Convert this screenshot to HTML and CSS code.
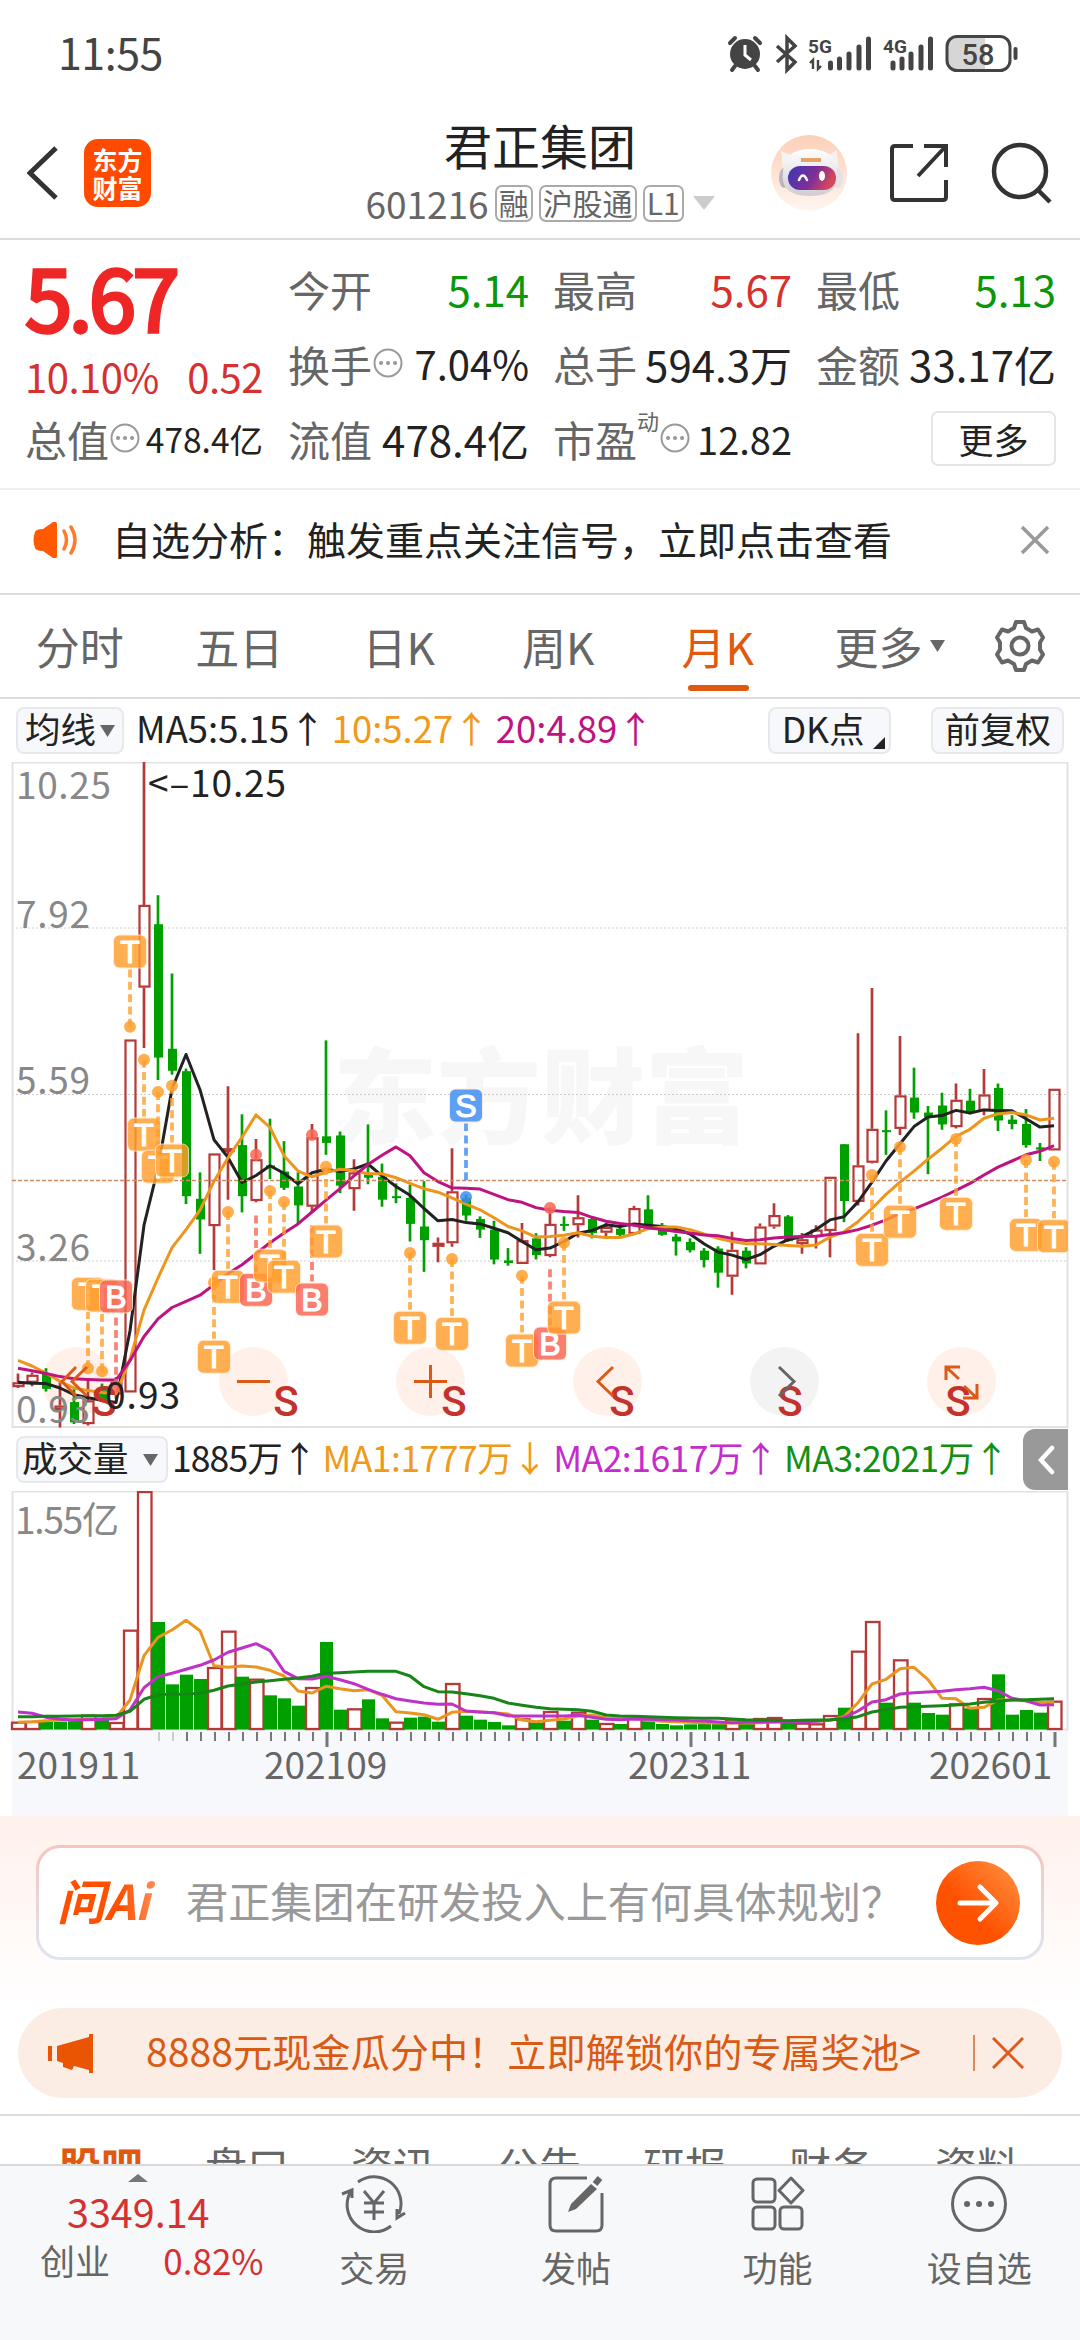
FILE: index.html
```html
<!DOCTYPE html>
<html lang="zh-CN">
  <head>
    <meta charset="UTF-8" />
    <meta name="viewport" content="width=device-width, initial-scale=1.0" />
    <title>君正集团 601216</title>
    <link rel="stylesheet" href="styles.css">
  </head>
  <body>
    <div class="status-bar">
      <span class="time">11:55</span>
      <svg class="status-icons" width="292" height="40" viewBox="726 34 292 40">
        <g fill="none" stroke="#444" stroke-width="4" stroke-linecap="round">
          <path d="M730 43l5-5M760 43l-5-5M735 66l-3 4M755 66l3 4" />
        </g>
        <circle cx="745" cy="54" r="15" fill="#444" />
        <path d="M745 45v10l6 5" fill="none" stroke="#fff" stroke-width="3" />
        <path d="M777 46l18 16-8 8V38l8 8-18 16" fill="none" stroke="#444" stroke-width="3.5" />
        <text x="808" y="53" class="net">5G</text>
        <path d="M813 69v-9l-3 3M818 60v9l3-3" fill="none" stroke="#444" stroke-width="2.4" />
        <text x="883" y="53" class="net">4G</text>
        <path d="M830.5 63v5M839.5 59v9M849 54v14M859 47v21M868.5 39v29M893 63v5M902 59v9M911 54v14M921 47v21M930.5 39v29"
          stroke="#444" stroke-width="5" stroke-linecap="round" />
        <path d="M956 37h29v33h-29q-9 0-9-9v-15q0-9 9-9z" fill="#d6d6d6" />
        <rect x="947" y="36.500" width="63" height="34" rx="10" fill="none" stroke="#444" stroke-width="3" />
        <path d="M1015.500 49v9" stroke="#444" stroke-width="4" stroke-linecap="round" />
        <text x="978" y="65" class="batt">58</text>
      </svg>
    </div>

    <header>
      <div class="head-left">
        <svg width="32" height="54" viewBox="0 0 32 54"><path d="M29 2L3 27l26 25" fill="none" stroke="#333" stroke-width="5" /></svg>
        <div class="logo"><span>东方</span><span>财富</span></div>
      </div>
      <div class="head-title">
        <h1>君正集团</h1>
        <div class="code">
          <span>601216</span><i>融</i><i>沪股通</i><i>L1</i>
          <svg width="22" height="14" viewBox="0 0 22 14"><path d="M0 0h22L11 14z" fill="#ccc" /></svg>
        </div>
      </div>
      <div class="head-right">
        <svg class="robot" width="76" height="76" viewBox="0 0 76 76">
          <defs>
            <linearGradient id="halo" x1="0" y1="0" x2="0" y2="1"><stop offset="0" stop-color="#fcd0b8" /><stop offset="1" stop-color="#fff6f0" /></linearGradient>
            <linearGradient id="visor" x1="0" y1="0" x2="1" y2="0.300"><stop offset="0" stop-color="#3c38b4" /><stop offset="0.600" stop-color="#7d2f98" /><stop offset="1" stop-color="#d5475c" /></linearGradient>
            <linearGradient id="shell" x1="0" y1="0" x2="0" y2="1"><stop offset="0" stop-color="#fff" /><stop offset="1" stop-color="#cfccd4" /></linearGradient>
          </defs>
          <circle cx="38" cy="38" r="38" fill="url(#halo)" />
          <path d="M12 32l-2-16 12 5zM58 20l8-5 1 18z" fill="#f5f2f2" />
          <ellipse cx="13" cy="43" rx="5" ry="10" fill="#b9b6c0" />
          <ellipse cx="67" cy="43" rx="5" ry="10" fill="#e5e1e4" />
          <path d="M12 36q2-22 27-22t27 22q4 25-27 25T12 36z" fill="url(#shell)" />
          <path d="M30 25h20" stroke="#e9a265" stroke-width="4" />
          <rect x="17" y="31" width="48" height="24" rx="12" fill="url(#visor)" />
          <path d="M28 45q4-9 8 0" fill="none" stroke="#fff" stroke-width="2.500" stroke-linecap="round" />
          <ellipse cx="51" cy="41" rx="3" ry="5" fill="#fff" />
        </svg>
        <svg width="60" height="60" viewBox="0 0 60 60" fill="none" stroke="#333" stroke-width="4">
          <path d="M24 3H6q-3 0-3 3v48q0 3 3 3h48q3 0 3-3V37M35 3h22v21M57 3L29 33" />
        </svg>
        <svg width="62" height="62" viewBox="0 0 62 62" fill="none" stroke="#333" stroke-width="4.500">
          <circle cx="29" cy="29" r="26" /><path d="M47 48l12 12" />
        </svg>
      </div>
    </header>

    <section class="quote">
      <div class="quote-main">
        <div class="price">5.67</div>
        <div class="change"><span>10.10%</span><span>0.52</span></div>
        <div class="cell"><label>总值</label><svg class="tip"><use href="#tip" /></svg><b class="small">478.4亿</b></div>
      </div>
      <div class="quote-grid">
        <div class="cell"><label>今开</label><b class="down">5.14</b></div>
        <div class="cell"><label>最高</label><b class="up">5.67</b></div>
        <div class="cell"><label>最低</label><b class="down">5.13</b></div>
        <div class="cell"><label>换手</label><svg class="tip"><use href="#tip" /></svg><b class="rate">7.04%</b></div>
        <div class="cell"><label>总手</label><b>594.3万</b></div>
        <div class="cell"><label>金额</label><b>33.17亿</b></div>
        <div class="cell"><label>流值</label><b>478.4亿</b></div>
        <div class="cell"><label>市盈</label><sup>动</sup><svg class="tip"><use href="#tip" /></svg><b class="mid">12.82</b></div>
        <div class="cell"><button class="more-btn">更多</button></div>
      </div>
      <svg width="0" height="0" class="defs">
        <symbol id="tip" viewBox="0 0 30 30">
          <circle cx="15" cy="15" r="13.500" fill="none" stroke="#999" stroke-width="2" />
          <path d="M8 15h.1M15 15h.1M22 15h.1" stroke="#999" stroke-width="4" stroke-linecap="round" />
        </symbol>
      </svg>
    </section>

    <section class="notice">
      <svg width="46" height="36" viewBox="0 0 46 36">
        <path d="M2 10q1-3 8-3L20 0q4-2 4 3v30q0 5-4 3L10 29q-7 0-8-3-3-8 0-16z" fill="#ff5a00" />
        <path d="M31 9q5 9 0 18M38 5q8 13 0 26" fill="none" stroke="#ff7a2a" stroke-width="3.500" stroke-linecap="round" />
      </svg>
      <span>自选分析：触发重点关注信号，立即点击查看</span>
      <svg class="close" width="30" height="30" viewBox="0 0 30 30"><path d="M2 2l26 26M28 2L2 28" stroke="#999" stroke-width="3.500" /></svg>
    </section>

    <nav class="period-tabs">
      <a>分时</a><a>五日</a><a>日K</a><a>周K</a><a class="active">月K</a>
      <a class="more">更多<svg width="15" height="12" viewBox="0 0 15 12"><path d="M0 0h15L7.500 12z" fill="#666" /></svg></a>
      <svg class="gear" width="52" height="52" viewBox="0 0 52 52" fill="none" stroke="#666" stroke-width="4" stroke-linejoin="round">
        <path d="M22 2h8l2 6 6 3.500 6-2 5 8-3 5v7l3 5-5 8-6-2-6 3.500-2 6h-8l-2-6-6-3.500-6 2-5-8 3-5v-7l-3-5 5-8 6 2L20 8z" />
        <circle cx="26" cy="26" r="8.500" />
      </svg>
    </nav>

    <div class="ind-row">
      <div class="pill"><span>均线</span><svg width="15" height="12" viewBox="0 0 15 12"><path d="M0 0h15L7.500 12z" fill="#666" /></svg></div>
      <div class="ma-values">
        <span class="ma5">MA5:5.15↑</span><span class="ma10">10:5.27↑</span><span class="ma20">20:4.89↑</span>
      </div>
      <div class="pill dk"><span>DK点</span><svg width="12" height="12" viewBox="0 0 12 12"><path d="M12 0v12H0z" fill="#222" /></svg></div>
      <div class="pill adj"><span>前复权</span></div>
    </div>

    <svg id="kline" width="1080" height="666"></svg>

    <div class="ind-row vol-row">
      <div class="pill vol"><span>成交量</span><svg width="15" height="12" viewBox="0 0 15 12"><path d="M0 0h15L7.500 12z" fill="#666" /></svg></div>
      <div class="vol-values">
        <span class="now">1885万↑</span><span class="v1">MA1:1777万↓</span><span class="v2">MA2:1617万↑</span><span class="v3">MA3:2021万↑</span>
      </div>
      <div class="drawer"><svg width="18" height="30" viewBox="0 0 18 30"><path d="M15 3L4 15l11 12" fill="none" stroke="#fff" stroke-width="4.500" stroke-linecap="round" /></svg></div>
    </div>

    <svg id="volume" width="1080" height="325"></svg>

    <section class="ask">
      <div class="ask-box">
        <span class="ask-logo">问Ai</span>
        <span class="ask-text">君正集团在研发投入上有何具体规划？</span>
        <div class="go"><svg width="44" height="40" viewBox="0 0 44 40"><path d="M4 20h35M24 4l16 16-16 16" fill="none" stroke="#fff" stroke-width="5" stroke-linecap="round" stroke-linejoin="round" /></svg></div>
      </div>
    </section>

    <section class="promo">
      <svg width="46" height="40" viewBox="0 0 46 40"><path d="M2 13v15" stroke="#ea5504" stroke-width="4" /><path d="M9 13L41 4V1h4v39h-4v-3l-15-4-2 4-9-3v-4l-6-2z" fill="#ea5504" /></svg>
      <span>8888元现金瓜分中！立即解锁你的专属奖池&gt;</span>
      <i></i>
      <svg width="32" height="32" viewBox="0 0 32 32"><path d="M1 1l30 30M31 1L1 31" stroke="#e0591a" stroke-width="3" /></svg>
    </section>

    <nav class="sub-tabs">
      <a class="active">股吧</a><a>盘口</a><a>资讯</a><a>公告</a><a>研报</a><a>财务</a><a>资料</a>
    </nav>

    <footer>
      <div class="index">
        <svg class="tri" width="20" height="8" viewBox="0 0 20 8"><path d="M0 8h20L10 0z" fill="#777" /></svg>
        <div class="index-val">3349.14</div>
        <div class="index-row"><span>创业</span><b>0.82%</b></div>
      </div>
      <div class="tool">
        <svg width="66" height="58" viewBox="0 0 66 58" fill="none" stroke="#666" stroke-width="3">
          <path d="M17 7A27 27 0 0 1 58 39M50 51A27 27 0 0 1 10 16M1 19l10-4v8M64 38l-8 5v-9M23 16l10 12 10-12M33 28v17M23 28h20M23 37h20" />
        </svg>
        <span>交易</span>
      </div>
      <div class="tool">
        <svg width="56" height="58" viewBox="0 0 56 58" fill="none" stroke="#666" stroke-width="3">
          <path d="M39 3H8Q2 3 2 9v41q0 6 6 6h40q6 0 6-6V18" />
          <path d="M20 37l3-8L43 9l6 5-21 20z" fill="#666" stroke="none" /><path d="M47 9l5-6" stroke-width="6" />
        </svg>
        <span>发帖</span>
      </div>
      <div class="tool">
        <svg width="54" height="58" viewBox="0 0 54 58" fill="none" stroke="#666" stroke-width="3">
          <rect x="2" y="4" width="22" height="23" rx="4" /><rect x="2" y="32" width="22" height="22" rx="4" /><rect x="29" y="32" width="22" height="22" rx="4" />
          <path d="M40 3l12 12.500L40 28 28 15.500z" stroke-linejoin="round" />
        </svg>
        <span>功能</span>
      </div>
      <div class="tool">
        <svg width="58" height="58" viewBox="0 0 58 58" fill="none" stroke="#666" stroke-width="3">
          <circle cx="29" cy="29" r="26.500" /><path d="M17 29h.1M29 29h.1M41 29h.1" stroke-width="6" stroke-linecap="round" />
        </svg>
        <span>设自选</span>
      </div>
    </footer>

    <script src="chart.js"></script>
  </body>
</html>
```
FILE: styles.css
```css
:root {
  --text: #222;
  --label: #666;
  --line: #dcdcdc;
  --up: #d6302f;
  --down: #0a970a;
  --orange: #e0590f;
}

* {
  box-sizing: border-box;
}

body {
  margin: 0;
  width: 1080px;
  height: 2340px;
  overflow: hidden;
  background: #fff;
  color: var(--text);
  font-family: "Noto Sans CJK SC", "Noto Sans", sans-serif;
  display: flex;
  flex-direction: column;
}

body > * {
  flex-shrink: 0;
}

svg {
  display: block;
  flex-shrink: 0;
}

i,
b {
  font-style: normal;
  font-weight: normal;
}

.status-bar {
  height: 108px;
  padding: 0 62px 0 58px;
  display: flex;
  align-items: center;
  justify-content: space-between;
}

.time {
  padding-bottom: 6px;
  font-size: 43px;
  letter-spacing: -0.500px;
  color: #444;
}

.net {
  font: bold 19px "Roboto", sans-serif;
  fill: #444;
}

.batt {
  font: 500 29px "Roboto", sans-serif;
  fill: #444;
  text-anchor: middle;
}

header {
  height: 132px;
  padding: 0 27px 0 27px;
  border-bottom: 2px solid var(--line);
  display: grid;
  grid-template-columns: 1fr auto 1fr;
  align-items: center;
}

.head-left {
  display: flex;
  align-items: center;
  gap: 25px;
}

.logo {
  width: 67px;
  height: 68px;
  border-radius: 14px;
  background: #ff4a00;
  color: #fff;
  font-size: 25px;
  font-weight: bold;
  line-height: 28px;
  display: flex;
  flex-direction: column;
  align-items: center;
  justify-content: center;
}

.head-title {
  display: flex;
  flex-direction: column;
  align-items: center;
}

h1 {
  margin: -4px 0 0;
  font-size: 48px;
  font-weight: normal;
  line-height: 64px;
}

.code {
  display: flex;
  align-items: center;
  gap: 6px;
  font-size: 37px;
  line-height: 54px;
  color: var(--label);
}

.code i {
  height: 37px;
  padding: 0 2px;
  border: 2px solid #aaa;
  border-radius: 7px;
  font-size: 30px;
  line-height: 31px;
}

.code svg {
  margin-left: 3px;
}

.head-right {
  display: flex;
  align-items: center;
  justify-content: flex-end;
  gap: 42px;
}

.quote {
  height: 250px;
  padding: 11px 24px 0 25px;
  border-bottom: 2px solid #eee;
  display: flex;
  gap: 25px;
}

.quote-main {
  width: 238px;
}

.price {
  height: 95px;
  font-size: 85px;
  line-height: 87px;
  letter-spacing: -3.500px;
  color: #ee2626;
  -webkit-text-stroke: 3.500px #ee2626;
}

.change {
  height: 55px;
  display: flex;
  justify-content: space-between;
  font-size: 40px;
  line-height: 60px;
  letter-spacing: -0.500px;
  color: var(--up);
}

.quote-grid {
  flex: 1;
  display: grid;
  grid-template-columns: 241px 239px 1fr;
  grid-template-rows: 75px 75px 75px;
  column-gap: 24px;
}

.cell {
  height: 75px;
  display: flex;
  align-items: center;
  font-size: 42px;
  line-height: 75px;
}

.cell label {
  color: var(--label);
  font-size: 42px;
}

.cell b {
  margin-left: auto;
}

.cell .small {
  font-size: 33.500px;
}

.cell .rate {
  font-size: 40px;
}

.cell .mid {
  font-size: 38px;
}

.cell sup {
  font-size: 22px;
  line-height: 30px;
  color: var(--label);
  align-self: flex-start;
  margin-top: 4px;
}

.tip {
  width: 30px;
  height: 30px;
  margin: -1px 0 0 1px;
}

.defs {
  position: absolute;
}

.up {
  color: var(--up);
}

.down {
  color: var(--down);
}

.more-btn {
  margin: 0 0 0 auto;
  width: 125px;
  height: 55px;
  padding: 0;
  border: 2px solid #e3e5e8;
  border-radius: 7px;
  background: #fff;
  color: var(--text);
  font: 35px/45px "Noto Sans CJK SC", sans-serif;
}

.notice {
  height: 105px;
  padding: 0 30px 3px 33px;
  border-bottom: 2px solid var(--line);
  display: flex;
  align-items: center;
  font-size: 39px;
}

.notice span {
  margin-left: 33px;
  padding-bottom: 4px;
}

.close {
  margin-left: auto;
}

.period-tabs {
  height: 104px;
  border-bottom: 2px solid var(--line);
  display: flex;
  align-items: center;
}

.period-tabs a {
  position: relative;
  width: 159.500px;
  text-align: center;
  font-size: 44px;
  line-height: 98px;
  color: var(--label);
}

.period-tabs .active {
  color: var(--orange);
}

.period-tabs .active::after {
  content: "";
  position: absolute;
  left: 50%;
  bottom: 4px;
  width: 61px;
  height: 6px;
  margin-left: -30px;
  border-radius: 3px;
  background: var(--orange);
}

.period-tabs .more {
  width: 184px;
  display: flex;
  align-items: center;
  justify-content: center;
  gap: 7px;
}

.gear {
  margin-left: 12px;
}

.ind-row {
  height: 63px;
  padding: 0 16px;
  display: flex;
  align-items: center;
}

.pill {
  height: 47px;
  padding: 0 7px;
  border: 2px solid #e6e8ec;
  border-radius: 8px;
  background: #f7f8fb;
  display: flex;
  align-items: center;
  gap: 4px;
  font-size: 35.500px;
  line-height: 40px;
}

.pill span {
  margin-top: -5px;
}

.ma-values {
  margin: -6px 0 0 12px;
  display: flex;
  gap: 6px;
  font-size: 36.500px;
}

.ma10 {
  color: #f09a1a;
}

.ma20 {
  color: #bd1482;
}

.pill.dk {
  margin-left: auto;
  padding: 0 4px 0 12px;
  gap: 9px;
}

.dk svg {
  align-self: flex-end;
  margin-bottom: 3px;
}

.pill.adj {
  margin-left: 40px;
  padding: 0 11px;
}

.vol-row {
  padding-right: 12px;
}

.pill.vol {
  width: 152px;
  padding: 0 8px 0 4px;
  justify-content: space-between;
}

.vol-values {
  margin: -6px 0 0 4px;
  display: flex;
  gap: 6px;
  font-size: 35.500px;
  letter-spacing: -0.500px;
}

.now {
  letter-spacing: -0.900px;
}

.v1 {
  color: #f09a1a;
}

.v2 {
  color: #c52ccb;
}

.v3 {
  color: #129012;
}

.drawer {
  margin-left: auto;
  width: 45px;
  height: 61px;
  border-radius: 12px 0 0 12px;
  background: #999;
  display: flex;
  align-items: center;
  justify-content: center;
}

.axis-text {
  font-size: 37px;
}

.badge {
  font: 32px "Liberation Sans", sans-serif;
  fill: #fff;
  stroke: #fff;
  stroke-width: 1.200px;
  text-anchor: middle;
}

.split {
  font: 500 42px "Roboto", sans-serif;
  fill: #c4322f;
  text-anchor: middle;
}

.watermark {
  font-size: 104px;
  font-weight: 900;
  fill: #f7f7f7;
}

.ask {
  height: 191px;
  padding: 29px 36px 0;
  background: linear-gradient(#fff1ec, #fff);
}

.ask-box {
  height: 115px;
  padding: 0 21px;
  border: 3px solid transparent;
  border-radius: 24px;
  background: linear-gradient(#fff, #fff) padding-box, linear-gradient(#f5c6bd, #dde5f3) border-box;
  display: flex;
  align-items: center;
}

.ask-logo {
  width: 106px;
  margin: -8px 0 0 -3px;
  font-size: 48px;
  font-weight: bold;
  font-style: italic;
  letter-spacing: -0.500px;
  color: transparent;
  background: linear-gradient(90deg, #ff5000 60%, #ff9a66);
  -webkit-background-clip: text;
  background-clip: text;
}

.ask-text {
  margin: -6px 0 0 23px;
  font-size: 42.200px;
  color: #999;
  white-space: nowrap;
}

.go {
  margin-left: auto;
  width: 84px;
  height: 84px;
  flex-shrink: 0;
  border-radius: 50%;
  background: linear-gradient(45deg, #ff5200 40%, #ff9545);
  display: flex;
  align-items: center;
  justify-content: center;
}

.promo {
  height: 90px;
  margin: 1px 18px 0;
  padding: 0 38px 0 30px;
  border-radius: 45px;
  background: #fcede4;
  display: flex;
  align-items: center;
  font-size: 39.200px;
  color: #d85a14;
}

.promo span {
  margin: -7px 0 0 52px;
}

.promo i {
  margin: 0 17px 0 auto;
  width: 2px;
  height: 36px;
  background: #d98a5c;
}

.sub-tabs {
  margin-top: 16px;
  height: 50px;
  padding: 0 28px;
  border-top: 2px solid var(--line);
  overflow: hidden;
  display: flex;
}

.sub-tabs a {
  width: 146px;
  text-align: center;
  font-size: 42px;
  line-height: 98px;
  color: var(--label);
}

.sub-tabs .active {
  color: var(--orange);
  font-weight: bold;
}

footer {
  flex: 1;
  border-top: 2px solid #d8d8d8;
  background: #f7f8fa;
  color: var(--label);
  display: flex;
}

.index {
  width: 274px;
  padding: 8px 10px 0 40px;
}

.tri {
  margin-left: 88px;
}

.index-val {
  margin: 5px 0 0 27px;
  font-size: 39.500px;
  line-height: 48px;
  color: var(--up);
}

.index-row {
  display: flex;
  justify-content: space-between;
  align-items: center;
  font-size: 35px;
  line-height: 50px;
}

.index-row b {
  color: var(--up);
}

.tool {
  width: 202px;
  padding-top: 9px;
  display: flex;
  flex-direction: column;
  align-items: center;
  gap: 10px;
  font-size: 35px;
  line-height: 48px;
}
```
FILE: chart.js
```js
const RED = "#b53a37";
const GREEN = "#00a000";
const X0 = 18;
const STEP = 14;

// direction, high, body top, body bottom, low
const candles = [
  ["r", 1417, 1437, 1448, 1450], ["r", 1415, 1420, 1438, 1446], ["g", 1405, 1418, 1452, 1458], ["r", 1437, 1490, 1500, 1540],
  ["g", 1450, 1482, 1528, 1532], ["r", 1430, 1478, 1532, 1535], ["g", 1440, 1455, 1475, 1480], ["r", 1425, 1436, 1465, 1475],
  ["r", 658, 658, 1460, 1460], ["r", 27, 352, 540, 677], ["g", 330, 396, 699, 750], ["g", 508, 679, 729, 738],
  ["g", 724, 730, 1014, 1032], ["g", 960, 1020, 1067, 1145], ["r", 917, 917, 1082, 1182], ["r", 764, 905, 913, 1022],
  ["g", 828, 898, 1014, 1051], ["r", 884, 930, 1025, 1028], ["g", 838, 944, 948, 975], ["g", 889, 958, 995, 1000],
  ["g", 960, 992, 1035, 1078], ["r", 850, 880, 1038, 1050], ["g", 660, 878, 893, 920], ["g", 867, 876, 990, 1007],
  ["r", 930, 960, 998, 1047], ["g", 851, 965, 972, 987], ["g", 940, 970, 1022, 1038], ["g", 985, 1014, 1018, 1030],
  ["g", 988, 1018, 1077, 1117], ["g", 980, 1083, 1114, 1186], ["r", 1108, 1120, 1129, 1164], ["r", 905, 1003, 1121, 1129],
  ["g", 1010, 1018, 1058, 1070], ["g", 1060, 1066, 1090, 1109], ["g", 1070, 1090, 1158, 1169], ["g", 1132, 1160, 1166, 1172],
  ["r", 1075, 1114, 1168, 1168], ["g", 1098, 1110, 1148, 1158], ["r", 1040, 1077, 1150, 1153], ["g", 1060, 1077, 1081, 1093],
  ["r", 1012, 1062, 1080, 1108], ["g", 1062, 1066, 1098, 1110], ["r", 1075, 1084, 1097, 1110], ["g", 1080, 1088, 1102, 1108],
  ["r", 1036, 1041, 1100, 1100], ["g", 1012, 1044, 1080, 1082], ["g", 1075, 1090, 1102, 1104], ["g", 1100, 1106, 1117, 1149],
  ["g", 1110, 1118, 1137, 1142], ["g", 1132, 1138, 1159, 1176], ["g", 1128, 1133, 1188, 1222], ["r", 1095, 1136, 1197, 1238],
  ["g", 1130, 1138, 1167, 1178], ["r", 1076, 1083, 1169, 1169], ["r", 1030, 1057, 1083, 1088], ["g", 1057, 1060, 1116, 1118],
  ["r", 1098, 1112, 1123, 1145], ["r", 1080, 1090, 1107, 1133], ["r", 970, 970, 1093, 1153], ["g", 896, 896, 1025, 1073],
  ["r", 644, 944, 1027, 1035], ["r", 541, 861, 938, 940], ["g", 819, 864, 867, 920], ["r", 650, 785, 861, 875],
  ["g", 722, 790, 824, 838], ["g", 809, 824, 835, 964], ["g", 779, 808, 851, 863], ["r", 758, 795, 857, 860],
  ["g", 770, 797, 823, 828], ["r", 725, 783, 820, 830], ["g", 758, 768, 842, 866], ["g", 830, 840, 850, 862],
  ["g", 816, 850, 898, 904], ["g", 893, 903, 908, 934], ["r", 770, 770, 910, 910],
];

const ma5 = [1437, 1439, 1440, 1450, 1465, 1472, 1478, 1483, 1320, 1080, 950, 770, 692, 772, 886, 926, 983, 967, 945, 962, 986, 961, 953, 958, 952, 941, 968, 992, 1012, 1042, 1070, 1067, 1074, 1077, 1087, 1097, 1117, 1136, 1132, 1117, 1098, 1092, 1079, 1083, 1077, 1080, 1083, 1088, 1100, 1122, 1141, 1148, 1158, 1147, 1128, 1113, 1106, 1090, 1068, 1061, 1027, 982, 934, 895, 856, 834, 831, 819, 825, 818, 819, 820, 838, 857, 854];
const ma10 = [1387, 1400, 1416, 1435, 1450, 1456, 1460, 1463, 1385, 1273, 1200, 1131, 1090, 1046, 980, 927, 880, 829, 858, 922, 957, 970, 960, 953, 956, 963, 963, 972, 985, 997, 1005, 1018, 1032, 1045, 1063, 1083, 1093, 1107, 1106, 1103, 1097, 1105, 1108, 1108, 1100, 1088, 1084, 1084, 1090, 1100, 1110, 1117, 1122, 1122, 1124, 1126, 1128, 1125, 1107, 1095, 1072, 1042, 1010, 982, 957, 930, 905, 878, 862, 837, 827, 824, 829, 841, 837];
const ma20 = [1405, 1411, 1417, 1424, 1429, 1431, 1432, 1432, 1388, 1333, 1293, 1267, 1253, 1239, 1215, 1190, 1170, 1145, 1120, 1098, 1077, 1050, 1023, 997, 968, 942, 921, 902, 922, 961, 981, 995, 996, 998, 1010, 1022, 1028, 1040, 1046, 1049, 1051, 1062, 1071, 1076, 1080, 1086, 1090, 1094, 1098, 1102, 1104, 1110, 1115, 1113, 1109, 1107, 1106, 1105, 1101, 1097, 1090, 1080, 1068, 1053, 1043, 1030, 1016, 1001, 985, 966, 948, 934, 920, 912, 899];

// candle index, badge letter, badge y, dot y, optional dash start
const marks = [
  [5, "T", 1236, 1405], [6, "T", 1240, 1412], [7, "B", 1242, 1448], [8, "T", 458, 629], [9, "T", 874, 704],
  [10, "T", 947, 777], [11, "T", 933, 763], [14, "T", 1379, 1210], [15, "T", 1220, 1050], [17, "B", 1227, 920, 1058],
  [18, "T", 1172, 1002], [19, "T", 1197, 1027], [21, "B", 1249, 875, 1080], [22, "T", 1117, 947], [28, "T", 1313, 1143],
  [31, "T", 1327, 1157], [32, "S", 808, 1016, 978], [36, "T", 1365, 1195], [38, "B", 1349, 1041, 1180], [39, "T", 1290, 1120],
  [61, "T", 1136, 966], [63, "T", 1072, 902], [67, "T", 1054, 884], [72, "T", 1102, 932], [74, "T", 1105, 936],
];
const markColor = { T: "#ff9f2e", B: "#fa6655", S: "#3d8df5" };

const volTop = [905, 903, 903, 905, 900, 884, 900, 906, 629, 213, 606, 793, 764, 777, 741, 632, 770, 776, 826, 835, 857, 801, 666, 869, 865, 838, 895, 905, 893, 890, 905, 789, 887, 899, 906, 916, 895, 908, 873, 902, 875, 899, 909, 912, 887, 904, 912, 916, 913, 910, 911, 896, 908, 894, 891, 908, 908, 910, 885, 863, 692, 603, 848, 718, 848, 879, 884, 850, 865, 834, 763, 884, 870, 878, 842];
const volRed = [0, 1, 5, 7, 8, 9, 14, 15, 17, 21, 24, 27, 31, 36, 38, 40, 42, 44, 51, 53, 54, 56, 57, 58, 60, 61, 63, 67, 69, 74];
const vma1 = [907, 905, 902, 900, 899, 897, 896, 893, 840, 707, 652, 630, 601, 632, 737, 742, 738, 741, 751, 768, 813, 819, 799, 806, 812, 809, 826, 875, 879, 884, 898, 877, 874, 876, 878, 882, 900, 905, 901, 897, 888, 885, 893, 896, 895, 900, 904, 905, 907, 908, 909, 909, 909, 908, 905, 903, 903, 904, 901, 890, 848, 792, 778, 746, 742, 779, 835, 836, 865, 862, 840, 840, 842, 846, 847];
const vma2 = [876, 880, 892, 898, 900, 899, 898, 896, 870, 803, 770, 760, 748, 736, 720, 697, 684, 671, 692, 754, 776, 777, 769, 779, 791, 808, 823, 836, 843, 849, 853, 852, 873, 876, 878, 887, 888, 888, 888, 888, 886, 892, 898, 899, 897, 898, 899, 900, 902, 903, 906, 908, 907, 906, 906, 906, 905, 904, 900, 893, 873, 846, 839, 822, 818, 816, 814, 809, 806, 802, 812, 835, 842, 855, 854];
const vma3 = [890, 890, 889, 889, 888, 887, 887, 886, 874, 838, 824, 822, 823, 820, 811, 798, 792, 786, 782, 778, 774, 769, 760, 758, 756, 754, 754, 754, 768, 800, 815, 816, 821, 827, 835, 849, 856, 862, 866, 868, 869, 874, 885, 888, 889, 890, 892, 893, 894, 895, 895, 897, 899, 900, 901, 902, 901, 900, 899, 897, 890, 876, 869, 862, 860, 859, 857, 855, 852, 847, 843, 840, 839, 838, 836];

const px = (i) => X0 + i * STEP;
const priceY = (v) => v * 0.44 - 12;
const volY = (v) => v / 3 - 71;

function line(values, y, color, width) {
  const points = values.map((v, i) => `${px(i)},${y(v).toFixed(1)}`).join(" ");
  return `<polyline points="${points}" fill="none" stroke="${color}" stroke-width="${width}" stroke-linejoin="round"/>`;
}

function label(x, y, text, color, extra = "") {
  return `<text class="axis-text" x="${x}" y="${y}" fill="${color}" ${extra}>${text}</text>`;
}

function drawKline() {
  let s = '<defs><clipPath id="clip"><rect x="12" y="0" width="1056" height="666"/></clipPath></defs>';
  s += '<text class="watermark" x="333" y="374">东方财富</text>';
  [166, 332.5, 499].forEach((y) => {
    s += `<path d="M12 ${y}H1068" stroke="#ccc" stroke-width="1" stroke-dasharray="2 2"/>`;
  });
  s += '<rect x="12.500" y="0.500" width="1055" height="664.500" fill="none" stroke="#e2e2e2" stroke-width="2"/>';

  [76.5, 253.5, 430.5, 607.5, 784.5, 961.5].forEach((x, i) => {
    s += `<circle cx="${x}" cy="619.500" r="34.500" fill="${i === 4 ? "#f3f3f3" : "#fff1ea"}"/>`;
  });

  candles.forEach(([dir, high, top, bottom, low], i) => {
    const x = px(i);
    const [h, t, b, l] = [high, top, bottom, low].map(priceY);
    if (dir === "r") {
      s += `<path d="M${x} ${h}V${t}M${x} ${b}V${l}" stroke="${RED}" stroke-width="2.700"/>`;
      s += `<rect x="${x - 4.5}" y="${t + 1}" width="10" height="${Math.max(b - t - 2, 2)}" fill="none" stroke="${RED}" stroke-width="2.200"/>`;
    } else {
      s += `<path d="M${x} ${h}V${l}" stroke="${GREEN}" stroke-width="2.700"/>`;
      s += `<rect x="${x - 4}" y="${t}" width="9" height="${Math.max(b - t, 2)}" fill="${GREEN}"/>`;
    }
  });

  s += line(ma5, priceY, "#222", 3);
  s += line(ma10, priceY, "#ee951c", 3);
  s += line(ma20, priceY, "#bd1482", 3);
  s += '<path d="M12 418.500H1068" stroke="#d08a60" stroke-width="1.500" stroke-dasharray="4 2"/>';

  s += '<g clip-path="url(#clip)">';
  marks.forEach(([i, type, badge, dot, dash]) => {
    const x = px(i);
    const c = markColor[type];
    const by = priceY(badge);
    const dy = priceY(dot);
    const from = by + (dy > by ? 18 : -18);
    s += `<path d="M${x} ${dash ? priceY(dash) : dy}V${from}" stroke="${c}" stroke-width="3.800" stroke-dasharray="8 4.300" opacity=".8"/>`;
    s += `<circle cx="${x}" cy="${dy}" r="6" fill="${c}" opacity=".85"/>`;
    s += `<rect x="${x - 16.5}" y="${by - 16.5}" width="33" height="33" rx="6" fill="${c}" opacity=".83" stroke="#ffe9cc" stroke-width="1"/>`;
    s += `<text class="badge" x="${x}" y="${by + 11.5}">${type}</text>`;
  });
  s += "</g>";

  for (let k = 0; k < 6; k++) {
    s += `<text class="split" x="${104 + (k === 0 ? 0 : 14) + k * 168}" y="654">S</text>`;
  }

  s += '<g fill="none" stroke="#dc5a18" stroke-width="3">';
  s += '<path d="M76 605L62 619.500l14 14.500M87 605L72 619.500l15 14.500M237 619.500h33M414 619.500h33M430.500 603v33M613 605L598 619.500l15 14.500"/>';
  s += '<path d="M946 618v-13h14M946 605l13 12M963 636h14v-14M964 624l13 12"/>';
  s += "</g>";
  s += '<path d="M779 605l15 14.500-15 14.500" fill="none" stroke="#666" stroke-width="3"/>';

  s += label(16, 37, "10.25", "#888", 'textLength="95"');
  s += label(16, 166, "7.92", "#888", 'textLength="74"');
  s += label(16, 332, "5.59", "#888", 'textLength="74"');
  s += label(16, 499, "3.26", "#888", 'textLength="74"');
  s += label(16, 661, "0.93", "#888", 'textLength="74"');
  s += label(148, 35, "&lt;–10.25", "#222", 'textLength="138"');
  s += label(105, 647, "0.93", "#222", 'textLength="75"');
  document.getElementById("kline").innerHTML = s;
}

function drawVolume() {
  let s = '<rect x="12" y="239" width="1056" height="87" fill="#f7f8fb"/>';
  s += '<rect x="12.500" y="0.500" width="1055" height="238" fill="none" stroke="#e2e2e2" stroke-width="2"/>';
  s += label(15, 43, "1.55亿", "#888", 'textLength="104"');
  volTop.forEach((v, i) => {
    const x = px(i);
    const y = volY(v);
    if (volRed.includes(i)) {
      s += `<rect x="${x - 6}" y="${y + 1}" width="13.500" height="${237 - y}" fill="#fff" stroke="${RED}" stroke-width="2.300"/>`;
    } else {
      s += `<rect x="${x - 6}" y="${y}" width="13" height="${238.5 - y}" fill="${GREEN}"/>`;
    }
  });
  s += line(vma1, volY, "#ea9520", 3);
  s += line(vma2, volY, "#bf32c8", 3);
  s += line(vma3, volY, "#178517", 3);

  const major = [22, 48, 74];
  for (let i = 10; i < 75; i++) {
    const big = major.includes(i);
    s += `<path d="M${px(i) + 1} 241v${big ? 15 : 9}" stroke="${i < 12 ? "#ccc" : "#777"}" stroke-width="${big ? 3 : 2}"/>`;
  }
  s += label(17, 288, "201911", "#666");
  s += label(264, 288, "202109", "#666");
  s += label(628, 288, "202311", "#666");
  s += label(929, 288, "202601", "#666");
  document.getElementById("volume").innerHTML = s;
}

drawKline();
drawVolume();
```
